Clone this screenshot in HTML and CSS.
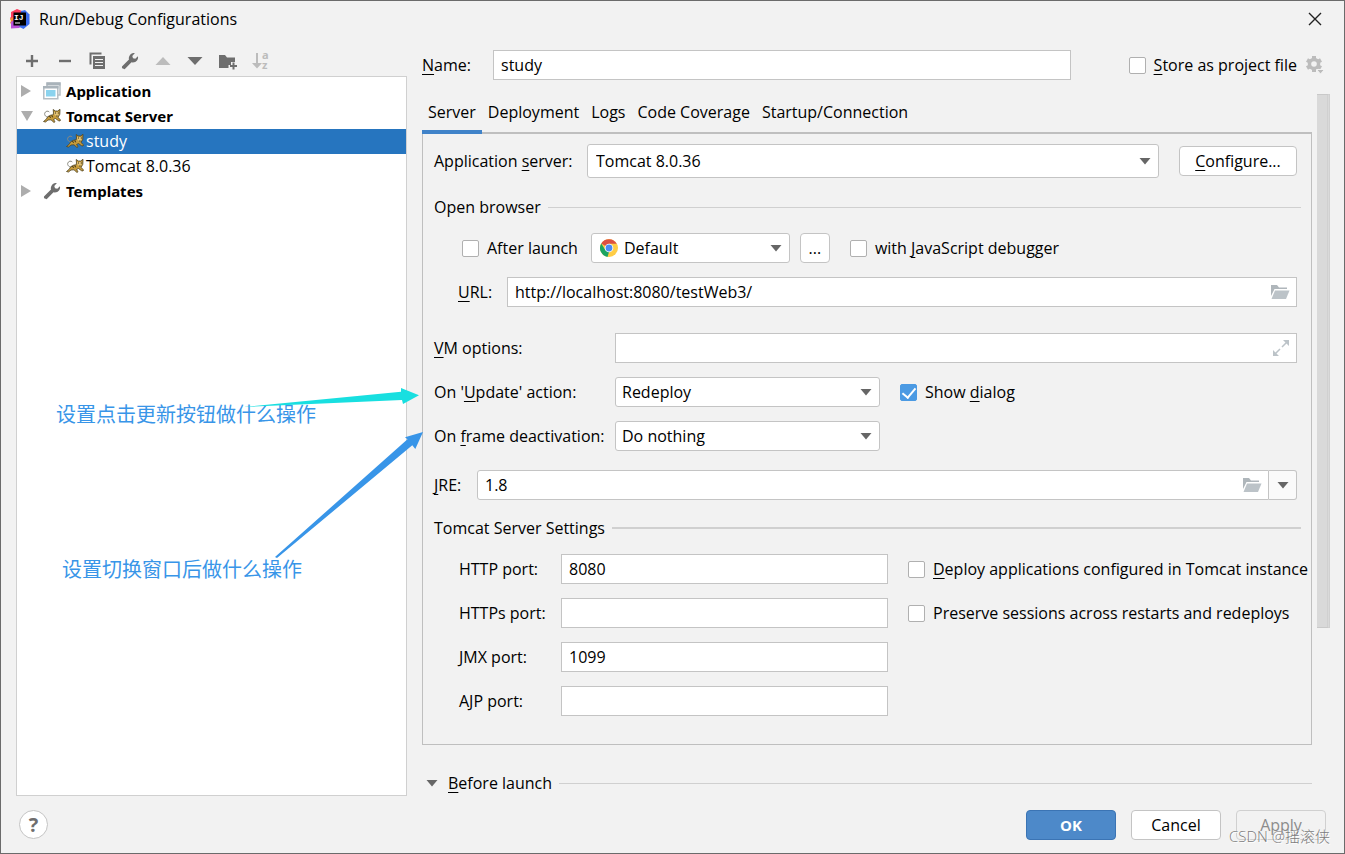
FILE: index.html
```
<!DOCTYPE html>
<html lang="en">
<head>
    <meta charset="utf-8">
    <title>Run/Debug Configurations</title>
    <link rel="stylesheet" href="styles.css">
</head>
<body>
    <!-- shared icons -->
    <svg class="defs" width="0" height="0">
        <symbol id="down" viewBox="0 0 12 8"><path d="M0.5 1h11L6 7.5z" fill="#666"/></symbol>
        <symbol id="wrench" viewBox="0 0 18 18">
            <path d="M1.2 14.2 8 7.6C7.3 4.9 9 1.5 12.6 1l1.3.1-2.6 2.8.7 2.3 2.3.6 2.6-2.6c.9 3.2-1.6 6.3-5.2 6.2l-1.2-.2-6.4 6.6C2.8 18 0 15.6 1.2 14.2z" fill="#6e6e6e"/>
        </symbol>
        <symbol id="folder" viewBox="0 0 20 16">
            <path d="M1 1h6l2 2.5h8V5H4.5L1 12z" fill="#afb6bb"/>
            <path d="M5 6.5h14.5L16 15H1.5z" fill="#bcc3c8"/>
        </symbol>
        <symbol id="cat" viewBox="0 0 18 14">
            <path d="M6 8C3 8.500 1 6 1.800 4 2.600 2 5 1.500 6.300 3" fill="none" stroke="#8a8a80" stroke-width="1"/>
            <path d="M.5 12.500 3 10.500 5 7.500 8 6h2l.5-2-.3-3.500L12.300 2h2.400L17 .3l-.2 5-1.800 3.200 2.500 2.300-.5 1.200-1.500-.3-3-2.200-2 1 1.500 2.200-1 .8-3-2.700-3 .2L2.500 13z" fill="#c79c3c" stroke="#4f4422" stroke-width=".8"/>
            <path d="M11 3h4.500v3L14 7.500 11.500 6z" fill="#e3c377"/>
            <path d="M12 4h1M14.800 4h1M6.500 7l1 1.800M8.800 6.500l.8 1.800M13.300 7h1.200" stroke="#2e2a1c" stroke-width="1"/>
        </symbol>
    </svg>

    <div class="dialog">
        <header class="titlebar">
            <svg class="logo" width="20" height="20" viewBox="0 0 20 20">
                <path d="M1 3 7 0l5 2-2 9-8 1-2-3 1-1z" fill="#fc3a5c"/>
                <path d="M0 10l3-2v8l-3-2 1-2z" fill="#f98a30"/>
                <path d="M1 13l3-2 8 6-3 2-8 .5z" fill="#b94fd8"/>
                <path d="M11 2l4-1 4.500 4.500V15l-6 5-4-2z" fill="#3b6df0"/>
                <path d="M3.500 3.500h12.500v13H3.500z" fill="#000"/>
                <text x="4" y="10.500" class="logo-text">IJ</text>
                <path d="M5 13.500h5v1H5z" fill="#fff"/>
            </svg>
            <span class="title">Run/Debug Configurations</span>
            <button class="icon-btn close" aria-label="Close">
                <svg width="14" height="14" viewBox="0 0 14 14"><path d="M1 1l12 12M13 1 1 13" stroke="#222" stroke-width="1.400"/></svg>
            </button>
        </header>

        <main class="main">
            <section class="left">
                <div class="toolbar">
                    <button class="icon-btn" aria-label="Add"><svg width="20" height="20" viewBox="0 0 20 20"><path d="M10 4v12M4 10h12" stroke="#6e6e6e" stroke-width="2.400"/></svg></button>
                    <button class="icon-btn" aria-label="Remove"><svg width="20" height="20" viewBox="0 0 20 20"><path d="M4 10h12" stroke="#6e6e6e" stroke-width="2.400"/></svg></button>
                    <button class="icon-btn" aria-label="Copy"><svg width="20" height="20" viewBox="0 0 20 20"><path d="M2.500 13.500V2.500h11" fill="none" stroke="#6e6e6e" stroke-width="2"/><path d="M5 5h12v13H5z" fill="#6e6e6e"/><path d="M7 8.500h8M7 11.500h8M7 14.500h8" stroke="#f2f2f2" stroke-width="1.200"/></svg></button>
                    <button class="icon-btn" aria-label="Edit templates"><svg width="18" height="18"><use href="#wrench"/></svg></button>
                    <button class="icon-btn" aria-label="Move up" disabled><svg width="20" height="20" viewBox="0 0 20 20"><path d="M2.500 14h15L10 6z" fill="#bcbcbc"/></svg></button>
                    <button class="icon-btn" aria-label="Move down"><svg width="20" height="20" viewBox="0 0 20 20"><path d="M2.500 6h15L10 14z" fill="#6e6e6e"/></svg></button>
                    <button class="icon-btn" aria-label="New folder"><svg width="20" height="20" viewBox="0 0 20 20"><path d="M1 4h6l2 2.500h8V11h-4v3h-2.500v3H1z" fill="#6e6e6e"/><path d="M15.500 11.500v7M12 15h7" stroke="#6e6e6e" stroke-width="2"/></svg></button>
                    <button class="icon-btn" aria-label="Sort" disabled><svg class="sort" width="20" height="20" viewBox="0 0 20 20"><path d="M6 2v13" stroke="#bcbcbc" stroke-width="2"/><path d="M1 12h10l-5 5.500z" fill="#bcbcbc"/><text x="11" y="8" class="sort-text">a</text><text x="11" y="18" class="sort-text">z</text></svg></button>
                </div>

                <ul class="tree">
                    <li class="group">
                        <svg class="arrow" width="10" height="12"><path d="M0 0l10 6-10 6z" fill="#adadad"/></svg>
                        <svg width="18" height="18" viewBox="0 0 18 18"><path d="M4 4V1h13v12h-3" fill="none" stroke="#b5bec4" stroke-width="1.500"/><path d="M3.500.5h14v3h-14z" fill="#a9b3ba"/><path d="M.8 4.800h14v12H.8z" fill="#fff" stroke="#b5bec4" stroke-width="1.500"/><path d="M0 4h15.500v2.500H0z" fill="#a9b3ba"/><path d="M3 8h9.500v6.500H3z" fill="#8bd3ee"/></svg>
                        <b>Application</b>
                    </li>
                    <li class="group">
                        <svg class="arrow" width="12" height="10"><path d="M0 0h12L6 10z" fill="#adadad"/></svg>
                        <svg width="18" height="14"><use href="#cat"/></svg>
                        <b>Tomcat Server</b>
                    </li>
                    <li class="item selected"><svg width="18" height="14"><use href="#cat"/></svg>study</li>
                    <li class="item"><svg width="18" height="14"><use href="#cat"/></svg>Tomcat 8.0.36</li>
                    <li class="group">
                        <svg class="arrow" width="10" height="12"><path d="M0 0l10 6-10 6z" fill="#adadad"/></svg>
                        <svg width="18" height="18"><use href="#wrench"/></svg>
                        <b>Templates</b>
                    </li>
                </ul>
            </section>

            <section class="right">
                <div class="name-row">
                    <label class="name-label" for="name"><u>N</u>ame:</label>
                    <input class="field name-field" id="name" type="text" value="study">
                    <label class="check store"><input type="checkbox"><span><u>S</u>tore as project file</span></label>
                    <button class="icon-btn gear" aria-label="Store settings">
                        <svg width="18" height="18" viewBox="0 0 18 18"><path d="M8 0v16M1 4l14 8M1 12l14-8" stroke="#bcbcbc" stroke-width="4"/><circle cx="8" cy="8" r="4.500" fill="none" stroke="#bcbcbc" stroke-width="3.500"/><circle cx="8" cy="8" r="2.800" fill="#f2f2f2"/><path d="M10.500 13.500h8L14.500 18z" fill="#bcbcbc" stroke="#f2f2f2"/></svg>
                    </button>
                </div>

                <div class="scroll">
                    <div class="content">
                        <nav class="tabs">
                            <button class="tab active">Server</button>
                            <button class="tab">Deployment</button>
                            <button class="tab">Logs</button>
                            <button class="tab">Code Coverage</button>
                            <button class="tab">Startup/Connection</button>
                        </nav>

                        <div class="panel">
                            <div class="row server-row">
                                <label class="server-label" for="server">Application <u>s</u>erver:</label>
                                <div class="select grow">
                                    <select id="server"><option>Tomcat 8.0.36</option></select>
                                    <svg class="caret" width="12" height="8"><use href="#down"/></svg>
                                </div>
                                <button class="btn configure"><u>C</u>onfigure...</button>
                            </div>

                            <h2 class="section">Open browser</h2>

                            <div class="row browser-row">
                                <label class="check"><input type="checkbox"><span>After launch</span></label>
                                <div class="select browser">
                                    <svg class="chrome" width="18" height="18" viewBox="0 0 18 18">
                                        <circle cx="9" cy="9" r="9" fill="#ffcd46"/>
                                        <path d="M9 9 1.200 4.500A9 9 0 0 1 16.800 4.800H9z" fill="#dd5144"/>
                                        <path d="M1.200 4.500 5.400 11 9 13l-1.500 4.900A9 9 0 0 1 1.200 4.500z" fill="#1da462"/>
                                        <circle cx="9" cy="9" r="4.300" fill="#fff"/>
                                        <circle cx="9" cy="9" r="3.400" fill="#4c8bf5"/>
                                    </svg>
                                    <select aria-label="Browser"><option>Default</option></select>
                                    <svg class="caret" width="12" height="8"><use href="#down"/></svg>
                                </div>
                                <button class="btn more">...</button>
                                <label class="check"><input type="checkbox"><span>with <u>J</u>avaScript debugger</span></label>
                            </div>

                            <div class="row url-row">
                                <label class="url-label" for="url"><u>U</u>RL:</label>
                                <div class="field-box grow">
                                    <input class="field" id="url" type="text" value="http://localhost:8080/testWeb3/">
                                    <svg class="field-icon" width="20" height="16"><use href="#folder"/></svg>
                                </div>
                            </div>

                            <div class="row vm-row">
                                <label class="wide-label" for="vm"><u>V</u>M options:</label>
                                <div class="field-box grow">
                                    <input class="field" id="vm" type="text">
                                    <svg class="field-icon" width="18" height="18" viewBox="0 0 18 18"><path d="M10 8l5-5M8 10l-5 5" stroke="#bcc3c8" stroke-width="1.500"/><path d="M11 1h6v6zM1 11v6h6z" fill="#bcc3c8"/></svg>
                                </div>
                            </div>

                            <div class="row">
                                <label class="wide-label" for="update">On '<u>U</u>pdate' action:</label>
                                <div class="select action">
                                    <select id="update"><option>Redeploy</option></select>
                                    <svg class="caret" width="12" height="8"><use href="#down"/></svg>
                                </div>
                                <label class="check"><input type="checkbox" checked><span>Show <u>d</u>ialog</span></label>
                            </div>

                            <div class="row">
                                <label class="wide-label" for="frame">On <u>f</u>rame deactivation:</label>
                                <div class="select action">
                                    <select id="frame"><option>Do nothing</option></select>
                                    <svg class="caret" width="12" height="8"><use href="#down"/></svg>
                                </div>
                            </div>

                            <div class="row jre-row">
                                <label class="jre-label" for="jre"><u>J</u>RE:</label>
                                <div class="field-box grow">
                                    <input class="field jre-field" id="jre" type="text" value="1.8">
                                    <svg class="field-icon" width="20" height="16"><use href="#folder"/></svg>
                                </div>
                                <button class="drop" aria-label="Choose JRE"><svg width="12" height="8"><use href="#down"/></svg></button>
                            </div>

                            <h2 class="section thick">Tomcat Server Settings</h2>

                            <div class="ports">
                                <label for="http">HTTP port:</label>
                                <input class="field" id="http" type="text" value="8080">
                                <label class="check"><input type="checkbox"><span><u>D</u>eploy applications configured in Tomcat instance</span></label>

                                <label for="https">HTTPs port:</label>
                                <input class="field" id="https" type="text">
                                <label class="check"><input type="checkbox"><span>Preserve sessions across restarts and redeploys</span></label>

                                <label for="jmx">JMX port:</label>
                                <input class="field" id="jmx" type="text" value="1099">
                                <span></span>

                                <label for="ajp">AJP port:</label>
                                <input class="field" id="ajp" type="text">
                            </div>
                        </div>

                        <h2 class="section before">
                            <svg width="12" height="8"><use href="#down"/></svg>
                            <span><u>B</u>efore launch</span>
                        </h2>
                    </div>
                    <div class="track"><div class="thumb"></div></div>
                </div>
            </section>
        </main>

        <footer class="footer">
            <button class="help" aria-label="Help">?</button>
            <button class="btn ok">OK</button>
            <button class="btn">Cancel</button>
            <button class="btn" disabled>Apply</button>
        </footer>

        <!-- notes drawn over the dialog -->
        <p class="note note-update">设置点击更新按钮做什么操作</p>
        <p class="note note-frame">设置切换窗口后做什么操作</p>
        <svg class="arrows" width="430" height="570" viewBox="0 0 430 570">
            <path d="M243 407 401 391.700 401 388 419 395.300 403 404 402 400z" fill="#18dfe0"/>
            <path d="M275 557 407.500 439.300 405 437.300 423 432 415.300 449 412.300 445.300 277 558z" fill="#3895e8"/>
        </svg>
        <span class="watermark">CSDN @摇滚侠</span>
    </div>
</body>
</html>
```
FILE: styles.css
```
:root {
    --bg: #f2f2f2;
    --fg: #000;
    --border: #c4c4c4;
    --line: #d0d0d0;
    --icon: #6e6e6e;
    --blue: #2675bf;
    --note: #3895e8;
}

* {
    box-sizing: border-box;
}

body {
    margin: 0;
    background: var(--bg);
    color: var(--fg);
    font-family: "Open Sans", "Noto Sans CJK SC", sans-serif;
    font-size: 16px;
    line-height: 24px;
}

input,
select,
button {
    margin: 0;
    font: inherit;
    color: inherit;
}

u {
    text-underline-offset: 3px;
    text-decoration-skip-ink: none;
}

svg {
    display: block;
    flex: none;
}

.defs {
    position: absolute;
}

.dialog {
    position: relative;
    display: flex;
    flex-direction: column;
    min-height: 100vh;
    border: 1px solid #6b6b6b;
}

.titlebar {
    display: flex;
    align-items: center;
    gap: 9px;
    height: 36px;
    padding: 0 22px 0 9px;
}

.title {
    flex: 1;
}

.logo-text {
    font: bold 8px "Liberation Mono", monospace;
    fill: #fff;
}

.icon-btn {
    display: flex;
    align-items: center;
    justify-content: center;
    padding: 0;
    background: none;
    border: none;
}

.main {
    display: flex;
    flex: 1;
    gap: 15px;
    padding: 0 14px 0 15px;
}

/* configurations tree */

.left {
    display: flex;
    flex-direction: column;
    width: 391px;
    padding-top: 8px;
}

.toolbar {
    display: flex;
    width: 261px;
    height: 31px;
}

.toolbar .icon-btn {
    flex: 1;
}

.sort {
    overflow: visible;
}

.sort-text {
    font: bold 11px "Noto Sans", sans-serif;
    fill: #bcbcbc;
}

.tree {
    flex: 1;
    margin: 0;
    padding: 2px 0;
    list-style: none;
    background: #fff;
    border: 1px solid #d0d0d0;
}

.tree li {
    display: flex;
    align-items: center;
    height: 25px;
    padding-bottom: 2px;
}

.tree .group {
    gap: 5px;
    padding-left: 4px;
}

.tree b {
    font-family: "Noto Sans", sans-serif;
    font-size: 15px;
}

.arrow {
    width: 17px;
}

.tree .item {
    gap: 2px;
    padding-left: 49px;
}

.selected {
    background: var(--blue);
    color: #fff;
}

/* right side */

.right {
    display: flex;
    flex: 1;
    flex-direction: column;
    min-width: 0;
    padding-top: 13px;
}

.name-row {
    display: flex;
    align-items: center;
    padding-right: 6px;
}

.name-label {
    width: 71px;
}

.name-field {
    flex: 1;
}

.store {
    margin: 0 9px 0 58px;
}

.field {
    width: 100%;
    height: 30px;
    padding: 0 7px 1px;
    background: #fff;
    border: 1px solid var(--border);
}

.field:focus,
select:focus {
    outline: none;
}

.scroll {
    display: flex;
    flex: 1;
    gap: 5px;
    padding-top: 14px;
}

.content {
    flex: 1;
    min-width: 0;
}

.track {
    width: 13px;
}

.thumb {
    height: 76%;
    background: #d9d9d9;
    border: 1px solid #c9c9c9;
    border-left: none;
    border-right: 3px double #d0d0d0;
}

.tabs {
    display: flex;
    height: 40px;
    border-bottom: 2px solid #bfbfbf;
}

.tab {
    height: 40px;
    padding: 0 6px;
    background: none;
    border: none;
    border-bottom: 4px solid transparent;
}

.tab.active {
    border-color: #4083c9;
}

.panel {
    display: flex;
    flex-direction: column;
    gap: 14px;
    padding: 10px 10px 28px 11px;
    border: 1px solid #bfbfbf;
    border-top: none;
}

.row {
    display: flex;
    align-items: center;
    padding-right: 4px;
}

.grow {
    flex: 1;
}

.server-label {
    width: 153px;
}

.configure {
    width: 118px;
    margin-left: 20px;
}

.select,
.field-box {
    position: relative;
}

.select select {
    display: block;
    width: 100%;
    height: 30px;
    padding: 0 30px 0 6px;
    appearance: none;
    background: #fff;
    border: 1px solid var(--border);
    border-radius: 3px;
}

.server-row select {
    height: 34px;
    padding-left: 8px;
}

.caret,
.field-icon,
.chrome {
    position: absolute;
    top: 0;
    bottom: 0;
    margin: auto 0;
    pointer-events: none;
}

.caret {
    right: 8px;
}

.field-icon {
    right: 7px;
}

.chrome {
    left: 9px;
}

.section {
    display: flex;
    align-items: center;
    gap: 7px;
    margin: 3px 0 0;
    font-size: inherit;
    font-weight: normal;
}

.section::after {
    content: "";
    flex: 1;
    height: 1px;
    background: var(--line);
}

.section.thick {
    margin-top: 2px;
}

.section.thick::after {
    height: 2px;
}

.browser-row {
    padding-left: 28px;
}

.browser {
    width: 199px;
    margin: 0 10px 0 13px;
}

.select.browser select {
    padding-left: 32px;
}

.more {
    margin-right: 20px;
}

.check {
    display: flex;
    align-items: center;
    gap: 8px;
    white-space: nowrap;
}

.check input {
    display: grid;
    flex: none;
    place-items: center;
    width: 17px;
    height: 17px;
    appearance: none;
    background: #fff;
    border: 1px solid #b0b0b0;
    border-radius: 2px;
}

.check input:checked {
    background: #4b9ae3;
    border-color: #4b9ae3;
}

.check input:checked::before {
    content: "";
    width: 6px;
    height: 11px;
    margin-bottom: 3px;
    border: solid #fff;
    border-width: 0 2px 2px 0;
    transform: rotate(40deg);
}

.url-row {
    padding-left: 24px;
}

.url-label {
    width: 49px;
}

.vm-row {
    margin-top: 12px;
}

.wide-label {
    width: 181px;
}

.action {
    width: 265px;
    margin-right: 20px;
}

.jre-row {
    margin-top: 5px;
}

.jre-label {
    width: 43px;
}

.jre-field {
    border-radius: 3px 0 0 3px;
}

.drop {
    display: flex;
    align-items: center;
    justify-content: center;
    width: 28px;
    height: 30px;
    padding: 0;
    background: #fafafa;
    border: 1px solid var(--border);
    border-left: none;
    border-radius: 0 3px 3px 0;
}

.ports {
    display: grid;
    grid-template-columns: 102px 1fr 413px;
    align-items: center;
    row-gap: 14px;
    padding-left: 25px;
}

.ports .check {
    padding-left: 20px;
}

.before {
    margin-top: 26px;
    padding-left: 4px;
}

.before svg {
    margin-right: 3px;
}

/* buttons */

.btn {
    height: 30px;
    padding: 0;
    background: #fff;
    border: 1px solid var(--border);
    border-radius: 4px;
}

.btn.more {
    width: 30px;
}

.footer {
    display: flex;
    align-items: center;
    gap: 15px;
    height: 57px;
    padding: 0 18px;
}

.footer .btn {
    width: 90px;
}

.footer .btn.ok {
    background: #4d89c9;
    border-color: #3b74b4;
    color: #fff;
    font-size: 15px;
    font-weight: bold;
}

.footer .btn:disabled {
    background: none;
    border-color: var(--line);
    color: #8c8c8c;
}

.help {
    width: 29px;
    height: 29px;
    margin-right: auto;
    padding: 0;
    background: #fff;
    border: 1px solid var(--border);
    border-radius: 50%;
    color: var(--icon);
    font-size: 20px;
    font-weight: bold;
}

/* notes */

.note {
    position: absolute;
    margin: 0;
    color: var(--note);
    font-family: "Noto Sans CJK SC", sans-serif;
    font-size: 20px;
}

.note-update {
    top: 401px;
    left: 55px;
}

.note-frame {
    top: 556px;
    left: 61px;
}

.arrows {
    position: absolute;
    top: -1px;
    left: -1px;
    pointer-events: none;
}

.watermark {
    position: absolute;
    right: 14px;
    bottom: 5px;
    color: #7c7c7c;
    font-size: 15px;
    font-weight: 300;
    text-shadow: 1px 1px 0 #fff;
}
```
